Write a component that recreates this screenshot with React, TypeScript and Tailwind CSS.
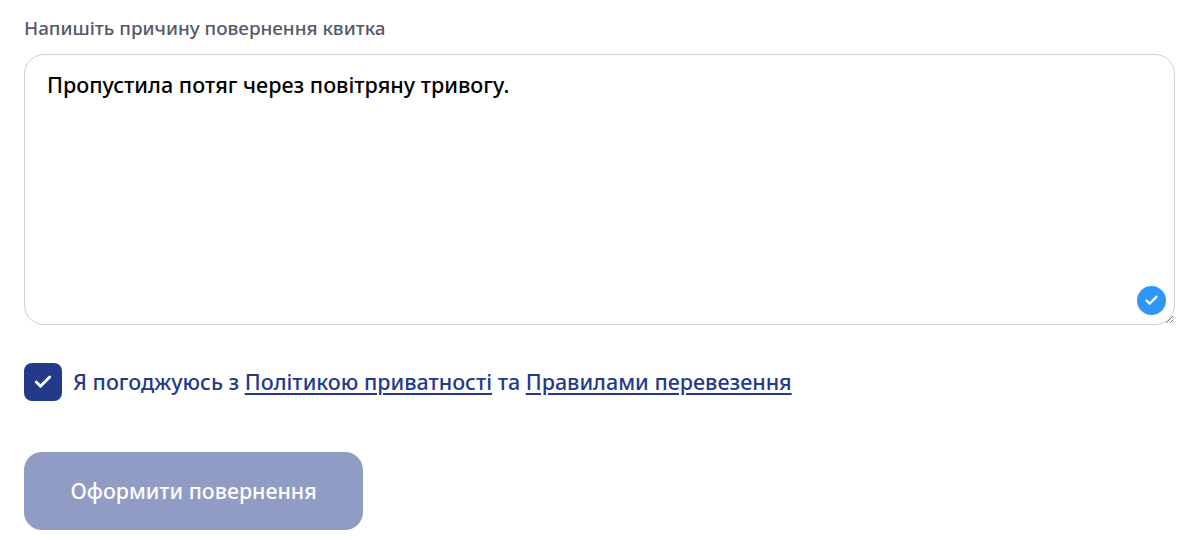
import { Check } from 'lucide-react'

export default function App() {
  return (
    <div className="min-h-[540px] w-[1200px] bg-white pl-6 pr-[25px] pt-[15px] font-['Noto_Sans',sans-serif]">
      <label className="block text-[18.85px] leading-[26px] font-medium text-[#565869]">
        Напишіть причину повернення квитка
      </label>

      <div className="relative mt-[13px] h-[271px]">
        <textarea
          defaultValue="Пропустила потяг через повітряну тривогу."
          className="block h-full w-full rounded-[20px] border-[1.5px] border-[#cfd0d6] bg-white px-[22px] py-[15px] text-[21.55px] leading-[30px] font-medium text-black outline-none"
        />
        {/* valid mark */}
        <div className="absolute right-[9px] bottom-[10px] flex h-[29px] w-[29px] items-center justify-center rounded-full bg-[#2e96f5]">
          <Check className="h-[15px] w-[15px] text-white" strokeWidth={3.5} />
        </div>
      </div>

      <div className="mt-[38px] flex items-center gap-[11px]">
        <div className="flex h-[38px] w-[38px] items-center justify-center rounded-[8px] bg-[#233a8b]">
          <Check className="h-[20px] w-[20px] text-white" strokeWidth={3.5} />
        </div>
        <p className="text-[21.5px] leading-[30px] font-medium text-[#233a8b]">
          Я погоджуюсь з{' '}
          <a href="#" className="underline underline-offset-[3px]">Політикою приватності</a>
          {' '}та{' '}
          <a href="#" className="underline underline-offset-[3px]">Правилами перевезення</a>
        </p>
      </div>

      <button className="mt-[51px] h-[78px] w-[339px] rounded-[18px] bg-[#919cc5] text-[21.35px] font-medium text-white">
        Оформити повернення
      </button>
    </div>
  )
}
